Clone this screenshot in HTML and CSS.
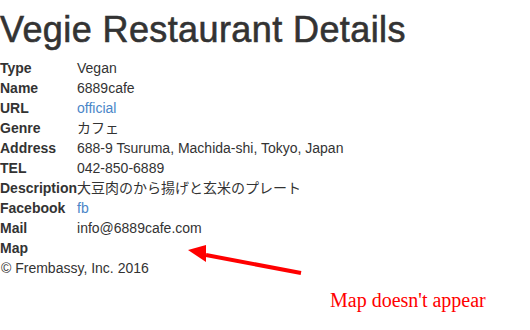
FILE: index.html
```html
<!DOCTYPE html>
<html lang="ja">
<head>
  <meta charset="UTF-8">
  <title>Vegie Restaurant Details</title>
  <link rel="stylesheet" href="styles.css">
</head>
<body>
  <h1>Vegie Restaurant Details</h1>

  <table class="details">
    <tr><th>Type</th><td>Vegan</td></tr>
    <tr><th>Name</th><td>6889cafe</td></tr>
    <tr><th>URL</th><td><a href="#">official</a></td></tr>
    <tr><th>Genre</th><td>カフェ</td></tr>
    <tr><th>Address</th><td>688-9 Tsuruma, Machida-shi, Tokyo, Japan</td></tr>
    <tr><th>TEL</th><td>042-850-6889</td></tr>
    <tr><th>Description</th><td>大豆肉のから揚げと玄米のプレート</td></tr>
    <tr><th>Facebook</th><td><a href="#">fb</a></td></tr>
    <tr><th>Mail</th><td>info@6889cafe.com</td></tr>
    <tr><th>Map</th><td></td></tr>
  </table>

  <footer class="copy">&copy; Frembassy, Inc. 2016</footer>

  <!-- 注釈（スクショ上の赤い矢印） -->
  <svg class="note-arrow" width="130" height="40" viewBox="0 0 130 40">
    <line x1="115" y1="33" x2="20" y2="15" stroke="#ff0000" stroke-width="4"/>
    <polygon points="2,10 20,5 20,22" fill="#ff0000"/>
  </svg>
  <div class="note-text">Map doesn't appear</div>
</body>
</html>
```

FILE: styles.css
```css
body {
  margin: 0;
  font-family: "Liberation Sans", Arial, "Noto Sans CJK JP", sans-serif;
  font-size: 14px;
  line-height: 20px;
  color: #333333;
  background: #ffffff;
}

h1 {
  margin: 10px 0 8px;
  font-size: 36px;
  line-height: 40px;
  font-weight: 500;
  letter-spacing: 0.4px;
  -webkit-text-stroke: 0.6px #333333;
}

a {
  color: #4a86c8;
  text-decoration: none;
}

.details {
  border-collapse: collapse;
  border-spacing: 0;
}

.details th,
.details td {
  padding: 0;
  text-align: left;
  vertical-align: top;
  height: 20px;
}

.details th {
  font-weight: bold;
}

.copy {
  padding-left: 1px;
}

/* 注釈 */
.note-arrow {
  position: absolute;
  left: 186px;
  top: 240px;
}

.note-text {
  position: absolute;
  left: 330px;
  top: 290px;
  font-family: "Liberation Serif", "Times New Roman", serif;
  font-size: 20px;
  line-height: 20px;
  color: #ff0000;
}
```
